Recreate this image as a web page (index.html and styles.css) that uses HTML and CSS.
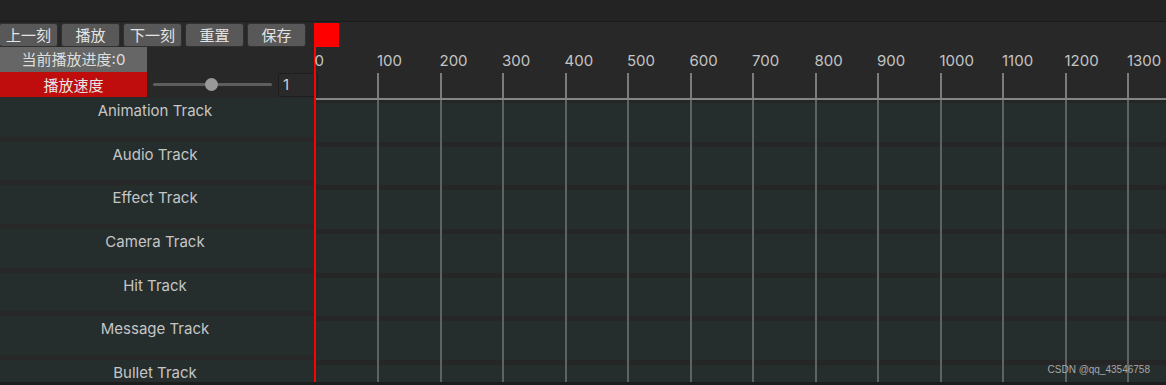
FILE: index.html
```
<!DOCTYPE html>
<html lang="zh-CN">
<head>
    <meta charset="UTF-8">
    <title>技能时间轴编辑器</title>
    <link rel="stylesheet" href="styles.css">
</head>
<body>
    <div class="title-strip"></div>
    <div class="editor">
        <div class="left-col">
            <div class="toolbar">
                <button class="tool-btn">上一刻</button>
                <button class="tool-btn">播放</button>
                <button class="tool-btn">下一刻</button>
                <button class="tool-btn">重置</button>
                <button class="tool-btn">保存</button>
            </div>
            <div class="progress-label">当前播放进度:0</div>
            <div class="speed-row">
                <div class="speed-label">播放速度</div>
                <div class="slider">
                    <div class="slider-track">
                        <div class="slider-thumb"></div>
                    </div>
                </div>
                <div class="speed-input">1</div>
            </div>
            <div class="track-list">
                <div class="track-name">Animation Track</div>
                <div class="track-name">Audio Track</div>
                <div class="track-name">Effect Track</div>
                <div class="track-name">Camera Track</div>
                <div class="track-name">Hit Track</div>
                <div class="track-name">Message Track</div>
                <div class="track-name">Bullet Track</div>
            </div>
        </div>
        <div class="right-col">
            <div class="marker-row">
                <div class="marker"></div>
            </div>
            <div class="timeline">
                <div class="ruler-labels" id="rulerLabels"></div>
                <div class="ruler-ticks"></div>
                <div class="ruler-line"></div>
                <div class="lanes"></div>
            </div>
        </div>
        <div class="watermark">CSDN @qq_43546758</div>
    </div>
    <div class="bottom-strip"></div>

    <script>
        // 刻度标签 0 - 1300
        var labels = document.getElementById('rulerLabels');
        for (var i = 0; i <= 13; i++) {
            var span = document.createElement('span');
            span.className = 'ruler-label';
            span.textContent = i * 100;
            labels.appendChild(span);
        }
    </script>
</body>
</html>
```

FILE: styles.css
```
body {
    margin: 0;
    width: 1166px;
    height: 385px;
    overflow: hidden;
    background-color: #282828;
    font-family: 'Inter', 'Noto Sans CJK SC', sans-serif;
    color: #c8c8c8;
}
.title-strip {
    height: 21px;
    background-color: #232323;
    border-bottom: 1px solid #1a1a1a;
}
.editor {
    position: relative;
    display: flex;
    margin-top: 1px;
    height: 359px;
    overflow: hidden;
}
.bottom-strip {
    height: 3px;
    background-color: #1d1d1d;
}
.left-col {
    width: 314px;
    flex-shrink: 0;
    display: flex;
    flex-direction: column;
}
.toolbar {
    display: flex;
    gap: 3px;
    height: 24px;
    margin-left: -1px;
}
.tool-btn {
    width: 59px;
    height: 24px;
    padding: 0;
    flex-shrink: 0;
    background-color: #585858;
    border: 1px solid #303030;
    border-radius: 3px;
    color: #e4e4e4;
    font-family: 'Noto Sans CJK SC', sans-serif;
    font-size: 15px;
    line-height: 20px;
}
.progress-label {
    width: 147px;
    height: 25px;
    line-height: 25px;
    text-align: center;
    background-color: #666666;
    color: #dedede;
    font-family: 'Inter', 'Noto Sans CJK SC', sans-serif;
    font-size: 15px;
}
.speed-row {
    display: flex;
    align-items: center;
    height: 25px;
}
.speed-label {
    width: 147px;
    height: 25px;
    flex-shrink: 0;
    line-height: 25px;
    text-align: center;
    background-color: #bf0d0d;
    color: #e6e6e6;
    font-family: 'Noto Sans CJK SC', sans-serif;
    font-size: 15px;
}
.slider {
    width: 119px;
    flex-shrink: 0;
    margin-left: 6px;
    margin-right: 6px;
}
.slider-track {
    display: flex;
    align-items: center;
    height: 3px;
    background-color: #5e5e5e;
    border-radius: 2px;
}
.slider-thumb {
    width: 13px;
    height: 13px;
    margin-left: 52px;
    border-radius: 50%;
    background-color: #999999;
    flex-shrink: 0;
}
.speed-input {
    width: 40px;
    height: 24px;
    line-height: 22px;
    padding-left: 4px;
    box-sizing: border-box;
    margin-top: 1px;
    background-color: #2a2a2a;
    border: 1px solid #1e1e1e;
    border-radius: 3px;
    color: #d0d0d0;
    font-size: 15px;
    flex-shrink: 0;
}
.track-list {
    display: flex;
    flex-direction: column;
    gap: 5px;
    margin-top: 1px;
}
.track-name {
    height: 38.67px;
    flex-shrink: 0;
    box-sizing: border-box;
    padding: 4px 4px 0 0;
    line-height: 18px;
    text-align: center;
    background-color: #252d2d;
    font-size: 15px;
    color: #c6c6c6;
}
.right-col {
    flex: 1;
    display: flex;
    flex-direction: column;
    min-width: 0;
}
.marker-row {
    height: 24px;
    flex-shrink: 0;
}
.marker {
    width: 25px;
    height: 24px;
    background-color: #ff0000;
}
.timeline {
    position: relative;
    flex: 1;
    display: flex;
    flex-direction: column;
    border-left: 2px solid #ff0000;
    margin-left: 0;
}
.ruler-labels {
    display: flex;
    height: 26px;
    margin-left: -1.5px;
    flex-shrink: 0;
    overflow: hidden;
}
.ruler-label {
    width: 62.5px;
    flex-shrink: 0;
    line-height: 27px;
    font-size: 15px;
    color: #c4c4c4;
}
.ruler-ticks {
    height: 25px;
    flex-shrink: 0;
    background-image: repeating-linear-gradient(90deg, #7c7c7c 0 0.5px, transparent 0.5px 61px, #7c7c7c 61px 62.5px);
}
.ruler-line {
    height: 2px;
    flex-shrink: 0;
    background-color: #858585;
}
.lanes {
    flex: 1;
    background-image:
        repeating-linear-gradient(90deg, #5b6363 0 0.5px, transparent 0.5px 61px, #5b6363 61px 62.5px),
        repeating-linear-gradient(180deg, #262626 0 3px, #252d2d 3px 41.67px, #262626 41.67px 43.67px);
}
.watermark {
    position: absolute;
    right: 16px;
    bottom: 7px;
    font-family: 'Liberation Sans', sans-serif;
    font-size: 10px;
    color: #a8a8a8;
}
```
